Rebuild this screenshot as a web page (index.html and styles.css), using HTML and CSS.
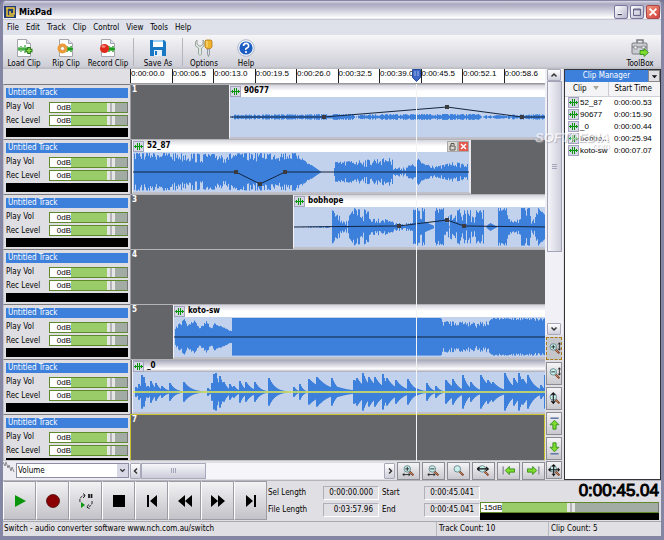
FILE: index.html
```html
<!DOCTYPE html>
<html lang="en">
<head>
<meta charset="utf-8">
<title>MixPad</title>
<link rel="stylesheet" href="styles.css">
</head>
<body>
<svg class="sprite" aria-hidden="true">
  <symbol id="wave" viewBox="0 0 9 9"><path d="M0 4.500h9M1.500 3v3M3.500 1v7M5.500 1v7M7.500 3v3" stroke="#0a960a" fill="none"/></symbol>
  <symbol id="page" viewBox="0 0 18 18"><path d="M2.500.5h9l4 4v13h-13z" fill="#fff" stroke="#a4a6ac"/><path d="M11.500.5v4h4" fill="#dde" stroke="#a4a6ac"/></symbol>
  <symbol id="lens" viewBox="0 0 16 16"><path d="M9 9l5 5" stroke="#7a3b22" stroke-width="2.500"/><path d="M9 9l4 4" stroke="#d6925e" stroke-width="1"/><circle cx="6.500" cy="6" r="4" fill="#c9efe9" stroke="#6d8d95" stroke-width="1.200"/></symbol>
</svg>
<div class="window">
  <header class="titlebar">
    <svg class="app-icon" viewBox="0 0 12 12"><rect width="12" height="12" fill="#223c78"/><path d="M2 2h8v6H6V5M3 2v8h7" fill="none" stroke="#f3c934" stroke-width="1.500"/></svg>
    <h1>MixPad</h1>
    <div class="caption-buttons">
      <button aria-label="Minimize"><svg viewBox="0 0 14 14"><path d="M3 10h5" stroke="#fff" stroke-width="3"/><path d="M3 10h5" stroke="#3a3a5c" stroke-width="1.500"/></svg></button>
      <button aria-label="Maximize"><svg viewBox="0 0 14 14"><path d="M3 3.500h8v7.500H3zM3 4.500h8" fill="none" stroke="#4c4c78"/></svg></button>
      <button class="close" aria-label="Close"><svg viewBox="0 0 14 14"><path d="M3 3l8 8M11 3l-8 8" stroke="#fff" stroke-width="2"/></svg></button>
    </div>
  </header>
  <nav class="menubar">
    <button>File</button><button>Edit</button><button>Track</button><button>Clip</button><button>Control</button><button>View</button><button>Tools</button><button>Help</button>
  </nav>
  <div class="toolbar">
    <button class="tool"><svg viewBox="0 0 18 18"><use href="#page"/><path d="M3 10h12M4 8v4M6 7v6M8 8v4M10 6v8M12 8v4" stroke="#0a960a"/><path d="M14 8v7M10.500 11.500h7" stroke="#26731a" stroke-width="3.500"/><path d="M14 9v5M11.500 11.500h5" stroke="#8be04c" stroke-width="1.500"/></svg><span>Load Clip</span></button>
    <button class="tool"><svg viewBox="0 0 18 18"><use href="#page"/><path d="M8 10h8M10 7v6M12 8v4M14 7v6" stroke="#0a960a" stroke-width="1.300"/><circle cx="5.500" cy="9.500" r="3.500" fill="none" stroke="#ec9b38" stroke-width="3"/><circle cx="5.500" cy="9.500" r="2" fill="#fff" stroke="#c26a10" stroke-width=".6"/></svg><span>Rip Clip</span></button>
    <button class="tool"><svg viewBox="0 0 18 18"><use href="#page"/><path d="M8 10h8M10 7v6M12 8v4M14 7v6" stroke="#0a960a" stroke-width="1.300"/><circle cx="5.500" cy="9.500" r="4.500" fill="#e02a1c"/><ellipse cx="4.500" cy="7.500" rx="2" ry="1.300" fill="#f48a7c"/></svg><span>Record Clip</span></button>
    <i class="rule"></i>
    <button class="tool wide"><svg viewBox="0 0 18 18"><path d="M1 1h14l2 2v14H1z" fill="#1878c4"/><path d="M4 1h10v7H4z" fill="#fff"/><path d="M4 1h10v2H4z" fill="#9ccdf0"/><path d="M5 11h8v6H5z" fill="#e5f0f8"/><path d="M6 12h2v4H6z" fill="#1878c4"/></svg><span>Save As</span></button>
    <i class="rule"></i>
    <button class="tool"><svg viewBox="0 0 18 18"><path d="M2 1v4l2 2h2l2-2V1L9 3v4L6.500 9v6q-1.500 3-3 0V9L.5 7V3z" fill="#dfe8e2" stroke="#8a968e" stroke-width=".8"/><path d="M11 1h5l1 1v6l-2 2h-3l-2-2V2z" fill="#efb42e" stroke="#b57a18" stroke-width=".8"/><path d="M12 2v6" stroke="#fbe48c"/><path d="M12.500 10h2v5l-1 2.500-1-2.500z" fill="#dde1e6" stroke="#767d86" stroke-width=".7"/></svg><span>Options</span></button>
    <button class="tool"><svg viewBox="0 0 18 18"><circle cx="9" cy="9" r="8.300" fill="#f3f6fb" stroke="#9aa7c0" stroke-width=".8"/><circle cx="9" cy="9" r="6.600" fill="#1d5cc0"/><path d="M6.500 7q0-2.700 2.600-2.700T11.600 7Q11.600 8.300 10 9t-1 1.800" fill="none" stroke="#fff" stroke-width="1.700"/><circle cx="9" cy="13" r="1.100" fill="#fff"/></svg><span>Help</span></button>
    <button class="tool toolbox"><svg viewBox="0 0 18 18"><path d="M6 4V1h6v3" fill="none" stroke="#777b80" stroke-width="1.500"/><rect x="1" y="4" width="15" height="11" rx="1" fill="#c9ccd0" stroke="#787c82"/><path d="M1 8h15" stroke="#787c82"/><path d="M3 7h3v3H3zM11 7h3v3h-3z" fill="#f1f2f3" stroke="#787c82" stroke-width=".7"/><path d="M9 11.500h4V9.500l4.500 4-4.500 4V15.500H9z" fill="#7ddc2c" stroke="#2c8516" stroke-width=".8"/></svg><span>ToolBox</span></button>
  </div>

  <main class="workspace">
    <div class="ruler">
      <span>0:00:00.0</span><span>0:00:06.5</span><span>0:00:13.0</span><span>0:00:19.5</span><span>0:00:26.0</span><span>0:00:32.5</span><span>0:00:39.0</span><span>0:00:45.5</span><span>0:00:52.1</span><span>0:00:58.6</span>
      <svg class="marker" viewBox="0 0 9 13"><path d="M.5.500h8v8l-4 4-4-4z" fill="#3c66c4" stroke="#274a9c"/><path d="M3 2v5M6 2v5" stroke="#9cb6ee"/></svg>
    </div>
    <section class="tracks" id="tracks"></section>
    <i class="playhead"></i>

    <div class="side">
      <div class="vscroll">
        <button class="arrow" aria-label="Scroll up"><svg viewBox="0 0 8 8"><path d="M1.500 5.500L4 3l2.500 2.500" fill="none" stroke="#333" stroke-width="1.500"/></svg></button>
        <i class="thumb"></i>
        <i class="trough"></i>
        <button class="arrow" aria-label="Scroll down"><svg viewBox="0 0 8 8"><path d="M1.500 2.500L4 5l2.500-2.500" fill="none" stroke="#333" stroke-width="1.500"/></svg></button>
      </div>
      <button class="view active" aria-label="Zoom in vertically"><svg viewBox="0 0 16 16"><use href="#lens"/><path d="M4 6h5M6.500 3.500v5M14 1v9M12.500 3L14 1l1.500 2M12.500 8l1.500 2 1.500-2" stroke="#111" fill="none"/></svg></button>
      <button class="view" aria-label="Zoom out vertically"><svg viewBox="0 0 16 16"><use href="#lens"/><path d="M4 6h5M14 1v9M12.500 3L14 1l1.500 2M12.500 8l1.500 2 1.500-2" stroke="#111" fill="none"/></svg></button>
      <button class="view" aria-label="Zoom full vertically"><svg viewBox="0 0 16 16"><use href="#lens"/><path d="M6.500 1v13M4 4l2.500-3L9 4M4 11l2.500 3L9 11" stroke="#111" stroke-width="1.300" fill="none"/></svg></button>
      <button class="view" aria-label="Move track up"><svg viewBox="0 0 16 16"><path d="M3 1.500h10" stroke="#667aa8" stroke-width="2"/><path d="M8 4l5.500 5.500H10V15H6V9.500H2.500z" fill="#7ddc2c" stroke="#2c8516"/></svg></button>
      <button class="view" aria-label="Move track down"><svg viewBox="0 0 16 16"><path d="M3 14.500h10" stroke="#667aa8" stroke-width="2"/><path d="M8 12l5.500-5.500H10V1H6v5.500H2.500z" fill="#7ddc2c" stroke="#2c8516"/></svg></button>
    </div>

    <div class="effect">
      <svg viewBox="0 0 12 12"><path d="M0 1l2 4 1-4 2 6 1-3 2 6 1-4 2 5" fill="none" stroke="#8a8a90"/></svg>
      <div class="combo">
        <select aria-label="Envelope"><option>Volume</option></select>
        <svg viewBox="0 0 8 8"><path d="M1.500 2.500L4 5l2.500-2.500" fill="none" stroke="#333" stroke-width="1.500"/></svg>
      </div>
    </div>
    <div class="hbar">
      <div class="hscroll">
        <button class="arrow" aria-label="Scroll left"><svg viewBox="0 0 8 8"><path d="M5 1.500L2.500 4 5 6.500" fill="none" stroke="#333" stroke-width="1.500"/></svg></button>
        <i class="thumb"></i><i class="trough"></i>
        <button class="arrow" aria-label="Scroll right"><svg viewBox="0 0 8 8"><path d="M3 1.500L5.500 4 3 6.500" fill="none" stroke="#333" stroke-width="1.500"/></svg></button>
      </div>
      <button class="view" aria-label="Zoom in"><svg viewBox="0 0 16 16"><use href="#lens"/><path d="M4 6h5M6.500 3.500v5M1 13h9M3 11.500L1 13l2 1.500M8 11.500l2 1.500-2 1.500" stroke="#111" fill="none"/></svg></button>
      <button class="view" aria-label="Zoom out"><svg viewBox="0 0 16 16"><use href="#lens"/><path d="M4 6h5M1 13h9M3 11.500L1 13l2 1.500M8 11.500l2 1.500-2 1.500" stroke="#111" fill="none"/></svg></button>
      <button class="view" aria-label="Zoom selection"><svg viewBox="0 0 16 16"><use href="#lens"/></svg></button>
      <button class="view" aria-label="Zoom full"><svg viewBox="0 0 16 16"><use href="#lens"/><path d="M0 6h14M3 3.500L0 6l3 2.500M11 3.500L14 6l-3 2.500" stroke="#111" stroke-width="1.300" fill="none"/></svg></button>
      <button class="view" aria-label="Jump to start"><svg viewBox="0 0 16 16"><path d="M1.500 3v10" stroke="#99a" stroke-width="2"/><path d="M9 3v3h6.500v4H9v3L4 8z" fill="#7ddc2c" stroke="#2c8516"/></svg></button>
      <button class="view" aria-label="Jump to end"><svg viewBox="0 0 16 16"><path d="M14.500 3v10" stroke="#99a" stroke-width="2"/><path d="M7 3v3H.5v4H7v3l5-5z" fill="#7ddc2c" stroke="#2c8516"/></svg></button>
    </div>
    <button class="view corner" aria-label="Zoom to fit"><svg viewBox="0 0 16 16"><use href="#lens"/><path d="M7 1v14M1 7h13M5 3l2-2 2 2M5 12l2 2 2-2M3 5L1 7l2 2M12 5l2 2-2 2" stroke="#111" stroke-width="1.300" fill="none"/></svg></button>

    <aside class="clips">
      <div class="clips-head"><h2>Clip Manager</h2><button aria-label="Panel menu"><svg viewBox="0 0 8 8"><path d="M1 2.500h6L4 6z" fill="#111"/></svg></button></div>
      <table>
        <thead><tr><th>Clip <svg viewBox="0 0 8 6"><path d="M1 1h6L4 5z" fill="#aaa89c"/></svg></th><th>Start Time</th></tr></thead>
        <tbody>
          <tr><td><svg class="chip"><use href="#wave"/></svg>52_87</td><td>0:00:00.53</td></tr>
          <tr><td><svg class="chip"><use href="#wave"/></svg>90677</td><td>0:00:15.90</td></tr>
          <tr><td><svg class="chip"><use href="#wave"/></svg>_0</td><td>0:00:00.44</td></tr>
          <tr><td><svg class="chip"><use href="#wave"/></svg>bobho...</td><td>0:00:25.94</td></tr>
          <tr><td><svg class="chip"><use href="#wave"/></svg>koto-sw</td><td>0:00:07.07</td></tr>
        </tbody>
      </table>
    </aside>
    <div class="watermark"><b>SOFTPEDIA</b><span>.com</span></div>
  </main>

  <footer class="transport">
    <div class="keys">
      <button aria-label="Play"><svg viewBox="0 0 16 16"><path d="M3 2l11 6-11 6z" fill="#0a960a"/></svg></button>
      <button aria-label="Record"><svg viewBox="0 0 16 16"><circle cx="8" cy="8" r="6.500" fill="#8b0000" stroke="#3c0000" stroke-width=".7"/></svg></button>
      <button aria-label="Loop"><svg viewBox="0 0 16 16"><path d="M2 9Q1 3 7 2.500M5 .5l2.500 2L5 5M14 8q1 5-5 6M11 11.500L8.500 14l3 1.500" fill="none" stroke="#222" stroke-dasharray="3 1"/><path d="M11 1v4M13.500 1v4" stroke="#111" stroke-width="1.700"/><path d="M3 9l4 3-4 3z" fill="#0a960a"/></svg></button>
      <button aria-label="Stop"><svg viewBox="0 0 16 16"><path d="M2 2h12v12H2z"/></svg></button>
      <button aria-label="Go to start"><svg viewBox="0 0 16 16"><path d="M3 2h2v12H3zM13 2v12L6 8z"/></svg></button>
      <button aria-label="Rewind"><svg viewBox="0 0 16 16"><path d="M8 2v12L1 8zM15 2v12L8 8z"/></svg></button>
      <button aria-label="Fast forward"><svg viewBox="0 0 16 16"><path d="M1 2v12l7-6zM8 2v12l7-6z"/></svg></button>
      <button aria-label="Go to end"><svg viewBox="0 0 16 16"><path d="M3 2v12l7-6zM11 2h2v12h-2z"/></svg></button>
    </div>
    <dl class="lengths">
      <dt>Sel Length</dt><dd>0:00:00.000</dd><dt>Start</dt><dd>0:00:45.041</dd>
      <dt>File Length</dt><dd>0:03:57.96</dd><dt>End</dt><dd>0:00:45.041</dd>
    </dl>
    <div class="master">
      <div class="clock">0:00:45.04</div>
      <div class="slider low"><output for="master-vol">-15dB</output><input id="master-vol" type="range" min="0" max="100" value="44" aria-label="Master volume"></div>
      <div class="meter"></div>
    </div>
  </footer>
  <div class="status"><span>Switch - audio converter software www.nch.com.au/switch</span><span>Track Count: 10</span><span>Clip Count: 5</span></div>
</div>
<script src="tracks.js"></script>
</body>
</html>
```
FILE: styles.css
```css
* { box-sizing: border-box; }
html, body { margin: 0; height: 100%; }
body {
  --ui: "DejaVu Sans Condensed", "DejaVu Sans", sans-serif;
  --face: #e0dfe3;
  --blue: #3d80dc;
  font: 8px/10px var(--ui);
  color: #000;
  background: #77779a;
}
button { font: inherit; color: inherit; margin: 0; padding: 0; border: 0; background: none; display: flex; align-items: center; justify-content: center; }
h1, h2, dl, dd { margin: 0; }
i { display: block; }
.sprite { position: absolute; width: 0; height: 0; }

.window { height: 100vh; display: flex; flex-direction: column; background: var(--face); border: solid #8585a4; border-width: 1px 3px 4px; border-radius: 6px 6px 0 0; overflow: hidden; }
.window > * { flex: none; }

.titlebar { height: 19px; display: flex; align-items: center; gap: 3px; padding: 3px 1px 0; background: linear-gradient(#d8d8e4 0, #a9a9c0 3px, #c5c5d6 8px, #fff 17px, #b4b4c8); }
.titlebar h1 { font: bold 9px/12px var(--ui); flex: 1; }
.app-icon { width: 12px; height: 12px; }
.caption-buttons { display: flex; gap: 2px; }
.caption-buttons button { width: 14px; height: 14px; border: 1px solid #77779c; border-radius: 2px; background: linear-gradient(135deg, #fff, #b4b4cc); }
.caption-buttons svg { width: 12px; height: 12px; }
.caption-buttons .close { background: linear-gradient(135deg, #f29a80, #d33b38); border-color: #a84848; }

.menubar { height: 15px; display: flex; padding-left: 1px; background: #dee1ea; }
.menubar button { padding: 0 4px 0 3px; }
.toolbar { height: 34px; display: flex; align-items: center; background: linear-gradient(#f6f6f8, #cfcfd8 31px, #b9b9c0); }
.tool { width: 42px; height: 33px; flex-direction: column; gap: 2px; justify-content: flex-end; white-space: nowrap; }
.tool.wide { width: 48px; }
.tool svg { width: 18px; height: 18px; }
.toolbox { margin-left: auto; }
.rule { width: 1px; height: 28px; background: #b4b5bd; }
.tool:nth-child(3) { margin-right: 4px; }

.workspace { flex: 1 0 0; min-height: 0; position: relative; display: grid; grid-template: 15px minmax(0, 1fr) 19px / 127px minmax(0, 1fr) 18px 98px; }
.ruler { grid-area: 1 / 2; position: relative; display: grid; grid-template-columns: repeat(10, minmax(0, 1fr)); background: #fff; border-bottom: 1px solid #9a9a9e; font: 8px/10px "Liberation Sans", sans-serif; }
.ruler span { border-left: 1px solid #222; white-space: nowrap; }
.marker { position: absolute; left: 282px; top: 0; width: 9px; height: 13px; }
.playhead { position: absolute; left: 413px; top: 15px; bottom: 19px; width: 1px; background: #f4f4f4; }

.tracks { grid-area: 2 / 1 / 3 / 3; overflow: hidden; border-bottom: 1px solid #c4c4c8; }
.track { display: grid; grid-template-columns: 127px minmax(0, 1fr); height: 55px; }
.panel { display: grid; grid-template: 12px 14px 13px 10px / minmax(0, 1fr); padding: 3px 2px 2px 2px; border: solid #77777c; border-width: 1px 0 0 1px; border-left-color: #c4c4cc; background: #dfdee2; align-items: center; }
.panel .name { align-self: stretch; margin: 0 0 2px; padding-left: 2px; font: 8px/10px var(--ui); color: #fff; background: var(--blue); }
.control { display: grid; grid-template-columns: 43px minmax(0, 1fr); align-items: center; }
.slider { display: flex; height: 11px; border: 1px solid #5e8a2c; border-right-color: #777; background: #fff; }
.slider output { width: 21px; text-align: right; font: 8px/9px "Liberation Sans", sans-serif; }
.slider.low output { text-align: left; }
.slider input { flex: 1; min-width: 0; height: 9px; margin: 0; appearance: none; background: linear-gradient(90deg, #9acc6a 76%, #a3aba5 76%); }
.slider.low input { background: linear-gradient(90deg, #9acc6a 44%, #a3aba5 44%); }
.slider input::-webkit-slider-thumb { appearance: none; width: 8px; height: 9px; background: linear-gradient(90deg, #e6e6e6 3px, #b4b4b8 3px 5px, #e6e6e6 5px); }
.meter { height: 9px; background: #000; }

.lane { display: flex; min-width: 0; background: #646568; border-left: 1px solid #9c9c9f; border-top: 1px solid #b4b4b8; position: relative; overflow: hidden; }
.lane .number { position: absolute; left: 1px; top: 0; color: #fff; font: bold 8px/9px var(--ui); }
.lane.selected { border: solid #c8c02c; border-width: 1px 1px 0; }
.clip { flex: 1 1 0; min-width: 0; border-left: 1px solid #f4f4f8; border-bottom: 2px solid #c0c0cb; background: #c2d1ec; position: relative; }
.clip.fixed { flex: none; border-right: 2px solid #e8e8ee; }
.clip header { height: 12px; display: flex; align-items: center; gap: 3px; background: linear-gradient(#d4d4de, #fff 6px); font: bold 8px/12px var(--ui); }
.clip.dim header { background: linear-gradient(#a8a8bc, #fff 9px, #a4a4b4); }
.clip header button { width: 11px; height: 11px; border: 1px solid #aaa; background: #dcd9d0; }
.clip header button:first-of-type { margin-left: auto; margin-right: -3px; }
.clip header button.x { background: #e4584c; }
.clip header button svg { width: 9px; height: 9px; }
.clip .body { display: block; width: 100%; height: 40px; }
.chip { flex: none; width: 11px; height: 11px; padding: 0; border: 1px solid #a4a4bc; background: #d6d6e6; }

.arrow { width: 14px; height: 12px; border: 1px solid #a8a8b8; border-radius: 1px; background: linear-gradient(#fff, #cfcfdc); }
.arrow svg { width: 8px; height: 8px; }
.side { grid-area: 1 / 3 / 3 / 4; display: flex; flex-direction: column; align-items: center; gap: 2px; padding-bottom: 1px; }
.vscroll { flex: 1; align-self: stretch; display: flex; flex-direction: column; align-items: center; background: #f0f0f6; }
.vscroll .thumb { width: 15px; flex: 0 0 171px; border: 1px solid #a4a4b8; background: repeating-linear-gradient(#a4a4b8 0 1px, transparent 1px 2px) center / 5px 5px no-repeat, linear-gradient(90deg, #f4f4fa, #cfcfdc); }
.vscroll .trough { flex: 1; }
.view { flex: none; width: 23px; height: 18px; border: 1px solid #8c8c94; background: linear-gradient(#f4f4f6, #c8c8ce); }
.view svg { flex: none; width: 13px; height: 13px; }
.side .view { width: 16px; height: 23px; }
.side .view.active { border: 1px dashed #a87c14; background: #c4c6ca; }
.corner { grid-area: 3 / 3; width: 16px; justify-self: center; }

.effect { grid-area: 3 / 1; display: flex; align-items: center; gap: 1px; padding-right: 1px; background: #ececf2; }
.effect > svg { flex: none; width: 12px; height: 12px; align-self: flex-start; }
.combo { flex: 1; display: flex; height: 15px; border: 1px solid #8c8ca4; background: #fff; }
.combo select { flex: 1; min-width: 0; padding: 0 0 0 1px; border: 0; font: 8px/12px var(--ui); color: #000; background: none; appearance: none; }
.combo svg { width: 11px; height: 13px; padding: 0 2px; background: #d8d8e6; }
.hbar { grid-area: 3 / 2; display: flex; align-items: center; gap: 2px; }
.hscroll { flex: 1; display: flex; height: 16px; background: #f6f6fa; }
.hscroll .thumb { flex: 0 0 65px; border: 1px solid #a8a8bc; background: repeating-linear-gradient(90deg, #a4a4b8 0 1px, transparent 1px 2px) center / 6px 5px no-repeat, linear-gradient(#f6f6fa, #ccccda); }
.hscroll .trough { flex: 1; }
.hscroll .arrow { width: 11px; height: 16px; }

.clips { grid-area: 1 / 4 / 4 / 5; border: 1px solid #33333a; background: #fff; margin-left: 1px; }
.clips-head { display: flex; height: 12px; background: var(--blue); color: #fff; }
.clips-head h2 { flex: 1; font: 8px/12px var(--ui); text-align: center; }
.clips-head button { width: 12px; border: 1px solid #888; background: #e0dfe3; }
.clips-head svg { width: 7px; height: 7px; }
.clips table { width: 100%; border-collapse: collapse; table-layout: fixed; }
.clips th { height: 14px; padding: 0 0 0 8px; font-weight: normal; text-align: left; background: #f4f4f6; border-bottom: 1px solid #d0d0da; white-space: nowrap; }
.clips th + th { border-left: 1px solid #ccccd4; padding-left: 6px; }
.clips th:first-child { width: 43px; }
.clips th svg { width: 8px; height: 6px; margin-left: 3px; }
.clips td { height: 12px; padding: 0 0 0 3px; white-space: nowrap; font: 8px/12px "Liberation Sans", sans-serif; }
.clips td + td { padding-left: 6px; }
.clips .chip { display: inline-block; width: 11px; height: 11px; margin-right: 1px; vertical-align: top; }
.watermark { position: absolute; left: 532px; top: 64px; display: flex; flex-direction: column; color: #fff; opacity: .6; text-shadow: 1px 1px 1px #99a; font: italic 13px/10px "Liberation Sans", sans-serif; white-space: nowrap; }
.watermark span { font-size: 9px; line-height: 6px; text-align: right; }

.transport { height: 41px; display: flex; border-top: 1px solid #b4b4bc; }
.keys { display: flex; }
.keys button { width: 33px; height: 39px; border: 1px solid #9c9ca4; border-left-color: #fff; background: linear-gradient(#f2f2f4, #c2c2c8); }
.keys svg { width: 16px; height: 16px; }
.lengths { flex: 1; display: grid; grid-template-columns: 56px 56px 45px 56px; align-content: center; row-gap: 3px; align-items: center; }
.lengths dt { padding-left: 1px; }
.lengths dt:nth-of-type(even) { padding-left: 3px; }
.lengths dd { height: 14px; padding-right: 5px; text-align: right; line-height: 12px; border: 1px solid #b0b0b8; border-right-color: #fff; border-bottom-color: #fff; }
.master { width: 181px; padding-right: 2px; display: flex; flex-direction: column; }
.clock { font: 17px/20px "Liberation Sans", sans-serif; -webkit-text-stroke: 1px #000; text-align: right; }
.master .slider { margin-top: 1px; }
.master .meter { height: 7px; }
.status { height: 15px; display: grid; grid-template-columns: minmax(0, 1fr) 112px 113px; border-top: 1px solid #a8a8b0; line-height: 14px; }
.status span { padding-left: 2px; border-left: 1px solid #b8b8c0; white-space: nowrap; }
.status span:first-child { border: 0; padding-left: 1px; }
```
FILE: tracks.js
```js
// Envelope shapes: [x, amplitude, jitter] points, x measured from the clip's left edge.
const clips = {
  1: { name: '90677', start: 98, env: [[2, 1, 0], [4, 2.5, 1.5], [122, 3, 1.5], [125, 0, 0], [128, 2, 1], [150, 3, 1.5], [248, 3, 1.5], [252, 0, 0], [256, 2, 1], [316, 3, 1.5]],
    line: [[0, 20], [94, 20], [217, 10], [292, 20], [320, 20]] },
  2: { name: '52_87', start: 1, width: 339, tools: true, env: [[1, 19, 0], [35, 19, 6], [80, 18, 8], [120, 19, 8], [165, 19, 7], [166, 16, 5], [178, 7, 3], [188, 0, 0], [200, 0, 0], [202, 10, 5], [230, 12, 5], [255, 14, 6], [259, 14, 6], [260, 4, 2], [270, 5, 3], [283, 9, 4], [285, 15, 2], [288, 9, 4], [305, 6, 3], [320, 10, 4], [334, 8, 4], [335, 0, 0]],
    line: [[0, 20], [103, 20], [127, 32], [152, 20], [340, 20]] },
  3: { name: 'bobhope', start: 162, env: [[0, 0, 0], [12, 0.5, 1], [33, 1, 1], [37, 0, 0], [38, 19, 0], [40, 14, 10], [52, 7, 6], [60, 19, 14], [74, 18, 14], [75, 9, 6], [95, 8, 4], [100, 4, 3], [118, 4, 3], [118.5, 19, 8], [130, 19, 14], [131, 5, 2], [140, 1, 0], [141, 19, 3], [149, 19, 8], [150, 8, 5], [165, 18, 10], [168, 7, 3], [170, 17, 12], [189, 17, 12], [190, 0, 0], [196, 4, 1], [203, 0, 0], [204, 19, 1], [212, 19, 8], [214, 8, 5], [226, 8, 4], [227, 19, 1], [232, 19, 6], [245, 19, 14], [252, 17, 10]],
    line: [[0, 20], [105, 19], [153, 13], [170, 19], [255, 20]] },
  5: { name: 'koto-sw', start: 42, env: [[1, 10, 2], [10, 18, 3], [13, 12, 2], [20, 17, 2], [25, 9, 2], [32, 16, 2], [37, 9, 2], [40, 14, 3], [57, 6, 1], [58, 19, 0], [267, 19, 0], [268, 16, 3], [300, 15, 4], [315, 16, 5], [318, 19, 0], [340, 19, 2], [342, 19, 0], [358, 19, 2], [360, 19, 0], [372, 19, 3]], line: [[0, 20], [375, 20]] },
  6: { name: '_0', start: 1, dim: true, yellow: true,
    hits: [[3, 5, 4], [6, 8, 4], [9, 17, 2], [11, 15, 2], [15, 6, 4], [18, 11, 4], [23, 9, 4], [29, 6, 5], [37, 9, 5], [51, 10, 7], [75, 4, 3], [79, 9, 4], [81, 18, 2], [83, 19, 3], [87, 16, 4], [91, 10, 4], [97, 8, 4], [101, 6, 4], [107, 11, 4], [113, 10, 6], [122, 10, 5], [136, 14, 6], [161, 5, 3], [167, 8, 3], [176, 13, 12], [184, 15, 12], [188, 11, 8], [199, 14, 5], [205, 5, 15], [221, 12, 20], [224, 14, 8], [230, 19, 6], [236, 15, 8], [242, 15, 8], [250, 18, 4], [254, 14, 8], [263, 12, 8], [275, 13, 6], [283, 4, 7], [294, 9, 4], [303, 6, 4], [313, 12, 8], [320, 13, 6], [330, 17, 5], [338, 10, 6], [348, 17, 8], [355, 12, 8], [360, 10, 8], [372, 19, 7], [381, 14, 7], [386, 19, 5], [390, 13, 7], [395, 17, 7], [408, 7, 4], [412, 17, 4]],
    line: [[0, 20], [415, 20]] }
};

let seed = 7;
const random = () => (seed = (seed * 16807) % 2147483647) / 2147483647;

function amplitude(clip, x) {
  if (clip.hits) {
    return clip.hits.reduce((top, [at, size, decay]) =>
      x >= at - 1 ? Math.max(top, size * Math.exp(-Math.max(0, x - at) / decay)) : top, 0);
  }
  const env = clip.env;
  for (let i = 1; i < env.length; i++) {
    const [x0, a0] = env[i - 1];
    const [x1, a1, jitter] = env[i];
    if (x >= x0 && x < x1) {
      const level = a0 + (a1 - a0) * (x - x0) / (x1 - x0);
      return Math.max(0, level - jitter * random() ** 2 * 1.2);
    }
  }
  return 0;
}

function wave(clip) {
  let d = '';
  for (let x = 0; x < (clip.width || 420); x++) {
    const a = amplitude(clip, x);
    if (a > 0.3) d += `M${x}.5 ${(20 - a).toFixed(1)}V${(20 + a * 0.98).toFixed(1)}`;
  }
  const points = clip.line.map(p => p.join()).join(' ');
  const handles = clip.line.length > 2 ? clip.line.slice(1, -1).map(([x, y]) =>
    `<rect x="${x - 2}" y="${y - 2}" width="4" height="4" fill="#3c3c40"/>`).join('') : '';
  return `<svg class="body"><path d="${d}" stroke="#3d80dc"/><polyline points="${points}" fill="none" stroke="${clip.yellow ? '#e2e850' : '#14243c'}" stroke-width="${clip.yellow ? 1.5 : 1}"/>${handles}</svg>`;
}

function clipHtml(clip) {
  const size = clip.width ? `width:${clip.width}px;` : '';
  const tools = clip.tools ? `<button aria-label="Lock"><svg viewBox="0 0 9 9"><path d="M2 4h5v4H2zM3 4V1.500h3V3" fill="none" stroke="#555"/></svg></button><button class="x" aria-label="Remove"><svg viewBox="0 0 9 9"><path d="M2 2l5 5M7 2L2 7" stroke="#fff" stroke-width="1.500"/></svg></button>` : '';
  return `<div class="clip${clip.width ? ' fixed' : ''}${clip.dim ? ' dim' : ''}" style="${size}margin-left:${clip.start}px"><header><svg class="chip"><use href="#wave"/></svg><span>${clip.name}</span>${tools}</header>${wave(clip)}</div>`;
}

const control = (label, id) => `<div class="control"><label for="${id}">${label}</label><div class="slider"><output for="${id}">0dB</output><input id="${id}" type="range" min="0" max="100" value="76"></div></div>`;

document.getElementById('tracks').innerHTML = [1, 2, 3, 4, 5, 6, 7].map(n => `
  <div class="track">
    <div class="panel"><h3 class="name">Untitled Track</h3>${control('Play Vol', 'play' + n)}${control('Rec Level', 'rec' + n)}<div class="meter"></div></div>
    <div class="lane${n === 7 ? ' selected' : ''}"><span class="number">${n}</span>${clips[n] ? clipHtml(clips[n]) : ''}</div>
  </div>`).join('');
```
